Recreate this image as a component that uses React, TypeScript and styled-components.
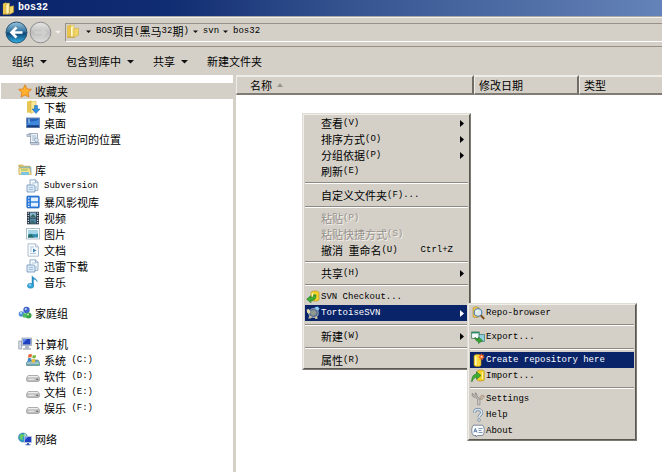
import React from "react";
import styled, { createGlobalStyle, css } from "styled-components";

const face = "#d4d0c8";
const navy = "#0a246a";

const GlobalStyle = createGlobalStyle`
  * { box-sizing: border-box; }
  body {
    margin: 0;
    background: #fff;
    overflow: hidden;
    font: 11px/16px "Liberation Mono", "Noto Sans CJK SC", monospace;
    color: #000;
  }
  button {
    font: inherit;
    color: inherit;
    border: 0;
    padding: 0;
    background: none;
    text-align: left;
  }
  a { color: inherit; text-decoration: none; }
  ul { list-style: none; margin: 0; padding: 0; }
  svg { display: block; flex: none; }
`;

/* ---------- text ---------- */

const Line = styled.span`
  display: inline-flex;
  align-items: center;
  white-space: pre;
`;
const Han = styled.span`
  font-family: "Noto Sans CJK SC", sans-serif;
  font-size: 11px;
  line-height: 16px;
`;
const Latin = styled.span`
  font-family: "Liberation Mono", monospace;
  font-size: 9px;
  line-height: 18px;
`;

function Text({ children }: { children: string }) {
  return (
    <Line>
      {children
        .split(/([\u4e00-\u9fff]+)/)
        .filter(Boolean)
        .map((run, i) =>
          /[\u4e00-\u9fff]/.test(run) ? <Han key={i}>{run}</Han> : <Latin key={i}>{run}</Latin>
        )}
    </Line>
  );
}

/* ---------- icons ---------- */

const shapes: Record<string, React.ReactNode> = {
  folder: (
    <>
      <path d="M1 2l3-1.500 2 1V13l-5 .5z" fill="#e9c44c" />
      <path d="M4.500 1.500L8 1v11.500l-3.500 1z" fill="#fbeb9c" stroke="#d0a83a" strokeWidth=".5" />
      <path d="M8 5l4.500-1V11L8 13.500z" fill="#f3d668" stroke="#c79d30" strokeWidth=".5" />
      <path d="M5.500 4v8" stroke="#fff8d0" />
      <path d="M1 13.500l4-.5 3 .5" stroke="#b18a2a" strokeWidth=".6" fill="none" />
    </>
  ),
  star: (
    <path
      d="M7 .8l1.900 4.100 4.500.5-3.300 3.100.9 4.600L7 10.900 3 13.100l.9-4.600L.6 5.400l4.500-.5z"
      fill="#ffb02e"
      stroke="#e07b12"
      strokeWidth=".8"
    />
  ),
  download: (
    <>
      <path d="M1 1.500l4-1 1 1V13l-5-.5z" fill="#e8c654" />
      <path d="M5 2l5-1v10l-5 2.500z" fill="#fae896" stroke="#d2ac42" strokeWidth=".5" />
      <path d="M8.500 5.500h3V9H14l-4 4.500L6 9h2.500z" fill="#2f8fdc" stroke="#1c62ac" strokeWidth=".5" />
    </>
  ),
  desktop: (
    <>
      <rect x=".5" y="2" width="13" height="9.500" fill="#2560b8" stroke="#6f8db8" />
      <path d="M1 8c4-5 8-1 12-5v6H1z" fill="#3d88dc" />
      <rect x="1" y="9.500" width="12" height="1.800" fill="#173a78" />
      <path d="M2 4h2M2 6h2" stroke="#cfe5fb" />
    </>
  ),
  recent: (
    <>
      <path d="M3 1.500h8.500v9H4.500V4L3 3z" fill="#eef3f8" stroke="#8d9bac" strokeWidth=".8" />
      <path d="M.8 2.500h4v2H1z" fill="#c6d1de" stroke="#8494a8" strokeWidth=".6" />
      <path d="M4 10.500h9v2.200H5z" fill="#c2ceda" stroke="#8494a8" strokeWidth=".6" />
      <path d="M6 4h4M6 6h4M6 8h3" stroke="#8ba5c2" strokeWidth=".8" />
      <circle cx="10.500" cy="8" r="2" fill="#dbe7f3" stroke="#7993ae" strokeWidth=".6" />
    </>
  ),
  library: (
    <>
      <path d="M.8 4V2h4l1 1.200H12v2z" fill="#ecd06a" stroke="#b99b3e" strokeWidth=".6" />
      <path d="M2 4h11v6H2z" fill="#9fd2ea" stroke="#4b95bb" strokeWidth=".5" />
      <path d="M.8 5h11l1.500 6.500H1z" fill="#f7e694" stroke="#b49b46" strokeWidth=".6" />
      <path d="M3 9h8v3H3z" fill="#7fc4df" />
      <path d="M3 7h7" stroke="#83b45d" />
    </>
  ),
  docs: (
    <>
      <path d="M4 .8h5.500l2.500 2.500v8H4z" fill="#f4f9fd" stroke="#7c9bbd" strokeWidth=".8" />
      <path d="M9.500.8v2.500H12" fill="none" stroke="#7c9bbd" strokeWidth=".7" />
      <path d="M1 6h6.500l1.500 1v6H1z" fill="#dceaf6" stroke="#6c92ba" strokeWidth=".8" />
      <path d="M3 8.500h4M3 10.500h4" stroke="#8db2d4" strokeWidth=".8" />
      <path d="M6 4h4M10 7v3" stroke="#a2bfd9" strokeWidth=".8" />
    </>
  ),
  storm: (
    <>
      <rect x=".8" y="1" width="12.500" height="12" rx="1" fill="#2c7fe0" stroke="#1c56ae" strokeWidth=".6" />
      <path d="M5 2.500h7v3.700H5zM5 7.800h7v3.700H5z" fill="#e6f2ff" />
      <path d="M2 3h1.500M2 6h1.500M2 9h1.500M2 11.500h1.500" stroke="#fff" />
    </>
  ),
  video: (
    <>
      <rect x="1" y=".8" width="12" height="12.500" fill="#273543" />
      <rect x="3.800" y="1.500" width="6.400" height="5" fill="#87b5c9" />
      <rect x="3.800" y="7.500" width="6.400" height="5" fill="#4f86a8" />
      <path d="M2.300 1.500v12M11.700 1.500v12" stroke="#dfe8ee" strokeWidth="1.200" strokeDasharray="1.200 1.200" />
      <path d="M4 6l3-3 3 3zM4 12l2-3 4 3z" fill="#366a66" />
    </>
  ),
  picture: (
    <>
      <rect x=".6" y="1.500" width="12.800" height="10.500" fill="#fafcfd" stroke="#9baebb" strokeWidth=".8" />
      <rect x="2" y="3" width="10" height="7.500" fill="#a2d5e8" />
      <path d="M2 7.500c3-2 6 1 10-1v4H2z" fill="#338fae" />
      <path d="M2 9l3-2 3 3.500H2z" fill="#2d6a66" />
    </>
  ),
  document: (
    <>
      <path d="M2 .8h7.500L12.500 4v9.200H2z" fill="#f8fbfd" stroke="#9db0c2" strokeWidth=".8" />
      <path d="M9.500.8V4h3" fill="#dbe6ef" stroke="#9db0c2" strokeWidth=".6" />
      <path d="M4 4h4M4 6h2M4 8h2M4 10.500h6" stroke="#9ab8d3" strokeWidth=".8" />
      <path d="M7 5.500l3.500 2L7 9.500z" fill="#4183bb" />
    </>
  ),
  music: (
    <>
      <path d="M6 .8c1 2.500 5 2.500 5.300 6-1-2-2.500-2.500-3.800-2.500V11H6z" fill="#2593cc" stroke="#1872a8" strokeWidth=".4" />
      <ellipse cx="4.600" cy="10.800" rx="3.200" ry="2.500" fill="#34a8dc" stroke="#1c79ac" strokeWidth=".5" />
      <ellipse cx="4" cy="10" rx="1.300" ry=".7" fill="#a9e0f5" />
    </>
  ),
  homegroup: (
    <>
      <circle cx="8.500" cy="4" r="3.200" fill="#3f63cc" />
      <circle cx="3.500" cy="8" r="2.800" fill="#4c8fdd" />
      <circle cx="10.500" cy="9.500" r="3" fill="#37a342" />
      <circle cx="6.800" cy="9.500" r="2.300" fill="#4dbb60" />
      <circle cx="7.800" cy="3.200" r="1.100" fill="#b9cdf8" />
      <circle cx="3" cy="7" r=".9" fill="#d7ebff" />
      <circle cx="10" cy="8.500" r="1" fill="#c4efc0" />
    </>
  ),
  computer: (
    <>
      <rect x=".8" y="4" width="3" height="8" fill="#d3dae3" stroke="#7f8b9a" strokeWidth=".6" />
      <rect x="4" y="1" width="9.500" height="7.500" fill="#cfd6e2" stroke="#7c8799" strokeWidth=".6" />
      <rect x="5" y="2" width="7.500" height="5.500" fill="#1e3fc0" />
      <path d="M5 2h4L5 6.500z" fill="#5c86ee" />
      <path d="M7.500 8.500h3l1 3h-5z" fill="#aeb8c7" />
      <path d="M5 12h8" stroke="#8793a5" />
    </>
  ),
  system: (
    <>
      <path d="M.5 9.500L3 7h9l1.500 2.500v3H.5z" fill="#72a6ae" stroke="#4c7c88" strokeWidth=".6" />
      <path d="M1 10h12" stroke="#c9e1e2" />
      <path d="M2.500 1.500c1.500-1 2.500-.5 3.500 0L5.500 4.500c-1-.5-2-.5-3.500.2z" fill="#e66532" />
      <path d="M6.800 2c1.200.6 2 .5 3.200 0L9.500 5c-1 .5-2 .5-3.200 0z" fill="#72b53a" />
      <path d="M2 5.500c1.300-.7 2.300-.6 3.300 0L4.800 8.500c-1-.5-2-.5-3.300.2z" fill="#3f85cf" />
      <path d="M6 6c1.200.6 2.200.5 3.300 0l-.5 3c-1 .5-2 .5-3.200 0z" fill="#f2bd2e" />
      <path d="M10.500 11.500h2" stroke="#4ad35f" />
    </>
  ),
  drive: (
    <>
      <path d="M.6 8.500L2.200 6.500h9.600l1.600 2v3.300l-1 .7H1.600l-1-.7z" fill="#bdbdbd" stroke="#8c8c8c" strokeWidth=".6" />
      <path d="M1.200 8.300l1.300-1.400h9l1.300 1.400z" fill="#ededed" />
      <path d="M2.500 10.300h6" stroke="#eee" />
      <path d="M10.300 10.300h1.800" stroke="#555" />
    </>
  ),
  network: (
    <>
      <circle cx="5" cy="5.500" r="4.500" fill="#2b9cc9" stroke="#196f98" strokeWidth=".5" />
      <path d="M2 3c2-2 4-1 4 .5S4 5 4.500 7 2 7.500 1.500 6z" fill="#68c862" />
      <path d="M6 1.500c1.500 0 2.500 1.500 2.500 2.500H6.500z" fill="#b8eac0" />
      <rect x="6.500" y="4.500" width="7" height="6" fill="#1c3fc4" stroke="#b9c3d5" strokeWidth=".8" />
      <path d="M7 5h3l-3 3z" fill="#668cf0" />
      <path d="M9 11h2v1.200h1.500v1H7.500v-1H9z" fill="#3c5cb4" />
    </>
  ),
  checkout: (
    <>
      <path d="M5 2.500C5 .5 13 .5 13 2.500v7c0 2-8 2-8 0z" fill="#f4d22c" stroke="#ad8610" strokeWidth=".6" />
      <path d="M6.500 3v6" stroke="#fff8b0" strokeWidth="1.500" />
      <path d="M10 5c0 4-1.500 5.500-5 5.500v2.300L.7 9.200 5 5.600v2c2 0 2.500-1 2.700-2.900z" fill="#3fae35" stroke="#1d7520" strokeWidth=".6" />
    </>
  ),
  tortoise: (
    <>
      <path d="M3 7.500C3 4 5.500 2 8.500 2.500s4.500 3 3.500 6.500c-1.500 3-6.500 3.500-9 .5z" fill="#5d6f92" stroke="#b9c4d8" strokeWidth=".7" />
      <path d="M5 5l3-1.200L10.500 6 9.500 9 6 9.800 4.300 7.500z" fill="#8f9a8e" />
      <path d="M8.500 1.500l3-1 2 2-1 2-2.500-.7z" fill="#8fc8ee" />
      <path d="M.7 3.500L3 3l1.500 3-1.700 2L1 6.500z" fill="#e6dcae" />
      <path d="M3.500 9.500l-1.300 3h2.500l1.500-1.500zM8.500 11l1 2h2l-.2-3z" fill="#cdc097" />
    </>
  ),
  browse: (
    <>
      <path d="M2 2C2 .5 8 .5 8 2v8.500c0 1.500-6 1.500-6 0z" fill="#efc858" stroke="#a88127" strokeWidth=".6" />
      <circle cx="7" cy="6.500" r="3.800" fill="#dbeefb" fillOpacity=".9" stroke="#4b7aa9" strokeWidth="1.100" />
      <path d="M9.800 9.300l3.400 3.700" stroke="#80511f" strokeWidth="2" />
      <path d="M5 6c.5-1.500 1.500-1.800 2.500-1.800" stroke="#fff" fill="none" />
    </>
  ),
  exporting: (
    <>
      <rect x=".7" y="2" width="7.500" height="6.500" fill="#f7fbff" stroke="#3c7a4c" strokeWidth=".8" />
      <path d="M.5 2.700h8" stroke="#2c8a6b" strokeWidth="1.500" />
      <rect x="8" y="4.500" width="5.500" height="7" fill="#8fcfe0" stroke="#397a6a" strokeWidth=".7" />
      <path d="M4 7c1 2 2 2 3.500 2V7l4 3.500-4 3V11.500C5 11.500 4 9.500 4 7z" fill="#38a235" stroke="#1e7220" strokeWidth=".5" />
    </>
  ),
  create: (
    <>
      <path d="M3 3c0-2 7-2 7 0v9c0 2-7 2-7 0z" fill="#f8d83a" stroke="#c49613" strokeWidth=".6" />
      <path d="M4.800 3.500v8.500" stroke="#fffac4" strokeWidth="1.500" />
      <path d="M10.500 0l.8 2 2-.5-1 1.900 1.500 1.300-2 .5-.1 2-1.500-1.300L8.500 7l.3-2.100L7 4l1.800-.9L8.500 1l1.500.9z" fill="#f4682a" />
      <circle cx="10.600" cy="3.700" r="1" fill="#ffd9a4" />
    </>
  ),
  importing: (
    <>
      <path d="M6 2.500c0-2 7.300-2 7.300 0v8c0 2-7.300 2-7.300 0z" fill="#f4d22c" stroke="#ad8610" strokeWidth=".6" />
      <path d="M11.500 3v7" stroke="#fff8b0" />
      <path d="M.7 13C.7 8 2 5.500 5.500 5V2.800L10 6.500l-4.500 3.700V8C3.500 8.500 2 10 .7 13z" fill="#3fae35" stroke="#1d7520" strokeWidth=".6" />
    </>
  ),
  settings: (
    <>
      <path
        d="M1.200 1.200v2.600l2 1.600 1.500-.4 2 2.500v5.300h2.200V7.200L5.800 3.800 6 2 4.200.8l.2 2-1.300.6z"
        fill="#bdbab4"
        stroke="#77726b"
        strokeWidth=".6"
      />
      <path d="M8.800 4.800l1.500-1.600 2.200.2 1 1.800-1.700-.5-.8 1 .8 1.300-2 .6z" fill="#cdb9a8" stroke="#8d7868" strokeWidth=".5" />
      <path d="M7.800 8v4.500" stroke="#e6e4e0" strokeWidth=".8" />
    </>
  ),
  help: (
    <>
      <path d="M3.500 4.700C3.500 2.500 5 1.500 7 1.500s3.700 1.200 3.700 3.200c0 2.300-2.700 2.300-2.700 4.500" fill="none" stroke="#71879d" strokeWidth="3" />
      <path d="M3.500 4.700C3.500 2.500 5 1.500 7 1.500s3.700 1.200 3.700 3.200c0 2.300-2.700 2.300-2.700 4.500" fill="none" stroke="#d8e5ef" strokeWidth="1.700" />
      <circle cx="8" cy="12" r="1.400" fill="#d8e5ef" stroke="#71879d" strokeWidth=".7" />
    </>
  ),
  about: (
    <>
      <path d="M3 1.200h8c3 0 3 10.300 0 10.300H6.500L5 13v-1.500H3C0 11.500 0 1.200 3 1.200z" fill="#fbfcfe" stroke="#66768a" strokeWidth=".8" />
      <path d="M2.800 8.500l1.600-4L6 8.500M3.400 7.200h2" stroke="#3c5f92" strokeWidth=".8" fill="none" />
      <path d="M7.500 4.500h4M7.500 6.500h3M7.500 8.500h4" stroke="#587aa4" strokeWidth=".8" />
    </>
  ),
};

function Icon({ name, size = 14 }: { name: string; size?: number }) {
  return (
    <svg width={size} height={size} viewBox="0 0 14 14" aria-hidden="true">
      {shapes[name]}
    </svg>
  );
}

const Down = ({ size = 7, color = "#111" }: { size?: number; color?: string }) => (
  <svg width={size} height={size} viewBox="0 0 7 7" aria-hidden="true">
    <path d="M0 2h7L3.500 5.500z" fill={color} />
  </svg>
);

const Right = () => (
  <svg width="4" height="7" viewBox="0 0 4 7" aria-hidden="true">
    <path d="M0 0l4 3.500L0 7z" fill="currentColor" />
  </svg>
);

/* ---------- window frame ---------- */

const Window = styled.main`
  display: flex;
  flex-direction: column;
  min-height: 100vh;
`;
const TitleBar = styled.header`
  display: flex;
  align-items: center;
  gap: 3px;
  height: 16px;
  padding-left: 2px;
  background: linear-gradient(90deg, ${navy} 0%, #102c72 25%, #35538f 52%, #6483b8 100%);
  color: #fff;
`;
const Title = styled.h1`
  margin: 0;
  font: bold 10px/18px "Liberation Mono", monospace;
`;
const NavBar = styled.div`
  display: flex;
  align-items: center;
  height: 31px;
  padding: 2px 0 0 4px;
  background: ${face};
  border-bottom: 1px solid #96928a;
  box-shadow: inset 0 1px #aaa8a4, inset 0 2px #f4f2ee;
`;
const RoundButton = styled.button`
  display: flex;
  width: 24px;
  height: 24px;
  align-items: center;
  justify-content: center;
`;
const HistoryButton = styled.button`
  width: 13px;
  padding-left: 3px;
`;
const Address = styled.div`
  display: flex;
  align-items: center;
  flex: 1;
  height: 19px;
  padding-bottom: 2px;
  border: solid;
  border-width: 1px 0 1px 1px;
  border-color: #96928a #fff #fff #96928a;
`;
const Crumb = styled.button`
  display: flex;
  align-items: center;
  gap: 5px;
  margin-right: 4px;
`;
const AddressIcon = styled.span`
  margin-right: 6px;
`;
const ToolBar = styled.div`
  display: flex;
  align-items: center;
  gap: 19px;
  height: 28px;
  padding-left: 12px;
  background: ${face};
`;
const ToolButton = styled.button`
  display: flex;
  align-items: center;
  gap: 6px;
`;
const Body = styled.div`
  display: flex;
  flex: 1;
`;

/* ---------- sidebar ---------- */

const Sidebar = styled.nav`
  display: flex;
  flex-direction: column;
  flex: none;
  gap: 15px;
  width: 236px;
  padding: 8px 0 0 1px;
  border-right: 3px solid ${face};
`;
const Place = styled.a<{ $child?: boolean; $selected?: boolean }>`
  display: flex;
  align-items: center;
  gap: ${(p) => (p.$child ? 4 : 3)}px;
  height: 16px;
  padding-left: ${(p) => (p.$child ? 25 : 17)}px;
  background: ${(p) => (p.$selected ? face : "transparent")};
`;

type Entry = [icon: string, label: string];
const groups: { head: Entry; items: Entry[]; selected?: boolean }[] = [
  {
    head: ["star", "收藏夹"],
    selected: true,
    items: [["download", "下载"], ["desktop", "桌面"], ["recent", "最近访问的位置"]],
  },
  {
    head: ["library", "库"],
    items: [
      ["docs", "Subversion"],
      ["storm", "暴风影视库"],
      ["video", "视频"],
      ["picture", "图片"],
      ["document", "文档"],
      ["docs", "迅雷下载"],
      ["music", "音乐"],
    ],
  },
  { head: ["homegroup", "家庭组"], items: [] },
  {
    head: ["computer", "计算机"],
    items: [["system", "系统 (C:)"], ["drive", "软件 (D:)"], ["drive", "文档 (E:)"], ["drive", "娱乐 (F:)"]],
  },
  { head: ["network", "网络"], items: [] },
];

/* ---------- file list ---------- */

const Files = styled.section`
  position: relative;
  flex: 1;
  min-width: 0;
`;
const Columns = styled.table`
  width: 100%;
  table-layout: fixed;
  border-collapse: separate;
  border-spacing: 0;
`;
const Column = styled.th<{ $width?: number; $indent?: number }>`
  width: ${(p) => (p.$width ? p.$width + "px" : "auto")};
  height: 20px;
  padding: 0 0 0 ${(p) => p.$indent ?? 4}px;
  background: ${face};
  border-top: 2px solid #efede8;
  border-bottom: 2px solid #807c74;
  border-right: ${(p) => (p.$width ? "2px solid #716d66" : "0")};
  border-left: 1px solid #efede8;
  font-weight: normal;
  text-align: left;
`;
const SortButton = styled.button`
  display: flex;
  align-items: center;
  gap: 5px;
`;

/* ---------- menus ---------- */

const Menu = styled.ul<{ $nested?: boolean }>`
  position: absolute;
  z-index: 1;
  padding: 0 1px;
  background: ${face};
  border: 2px solid;
  border-color: #f0eee9 #5a5751 #5a5751 #f0eee9;
  outline: 1px solid rgba(190, 186, 178, 0.35);
  outline-offset: -1px;
  ${(p) =>
    p.$nested
      ? css`
          top: -2px;
          left: calc(100% - 1px);
          width: 170px;
        `
      : css`
          top: 38px;
          left: 66px;
          width: 169px;
        `}
`;
const MenuRow = styled.li`
  position: relative;
`;
const MenuButton = styled.button<{ $active?: boolean }>`
  display: flex;
  align-items: center;
  width: 100%;
  height: 16px;
  padding: 0 4px 0 1px;
  background: ${(p) => (p.$active ? navy : "transparent")};
  color: ${(p) => (p.$active ? "#fff" : "#000")};
  &:disabled {
    color: #96928c;
    text-shadow: 1px 1px #f4f2ee;
  }
`;
const MenuIcon = styled.span`
  width: 15px;
  flex: none;
`;
const MenuLabel = styled.span`
  flex: 1;
  display: flex;
`;
const Shortcut = styled.span`
  display: flex;
  margin-right: 11px;
`;
const Divider = styled.li<{ $tight?: boolean }>`
  height: ${(p) => (p.$tight ? 7 : 8)}px;
  padding-top: 3px;
  &::before {
    content: "";
    display: block;
    border-top: 1px solid #8e8a82;
    border-bottom: 1px solid #fff;
  }
`;

type Item =
  | "divider"
  | "tight"
  | {
      label: string;
      icon?: string;
      shortcut?: string;
      more?: boolean;
      disabled?: boolean;
      active?: boolean;
      items?: Item[];
    };

const svnItems: Item[] = [
  { label: "Repo-browser", icon: "browse" },
  "divider",
  { label: "Export...", icon: "exporting" },
  "tight",
  { label: "Create repository here", icon: "create", active: true },
  { label: "Import...", icon: "importing" },
  "tight",
  { label: "Settings", icon: "settings" },
  { label: "Help", icon: "help" },
  { label: "About", icon: "about" },
];

const contextItems: Item[] = [
  { label: "查看(V)", more: true },
  { label: "排序方式(O)", more: true },
  { label: "分组依据(P)", more: true },
  { label: "刷新(E)" },
  "divider",
  { label: "自定义文件夹(F)..." },
  "tight",
  { label: "粘贴(P)", disabled: true },
  { label: "粘贴快捷方式(S)", disabled: true },
  { label: "撤消 重命名(U)", shortcut: "Ctrl+Z" },
  "tight",
  { label: "共享(H)", more: true },
  "divider",
  { label: "SVN Checkout...", icon: "checkout" },
  { label: "TortoiseSVN", icon: "tortoise", more: true, active: true, items: svnItems },
  "tight",
  { label: "新建(W)", more: true },
  "divider",
  { label: "属性(R)" },
];

function PopupMenu({ items, label, nested }: { items: Item[]; label: string; nested?: boolean }) {
  return (
    <Menu role="menu" aria-label={label} $nested={nested}>
      {items.map((item, i) =>
        typeof item === "string" ? (
          <Divider key={i} role="separator" $tight={item === "tight"} />
        ) : (
          <MenuRow key={i} role="none">
            <MenuButton
              type="button"
              role="menuitem"
              disabled={item.disabled}
              $active={item.active}
              aria-haspopup={item.more ? "menu" : undefined}
            >
              <MenuIcon>{item.icon && <Icon name={item.icon} />}</MenuIcon>
              <MenuLabel>
                <Text>{item.label}</Text>
              </MenuLabel>
              {item.shortcut && (
                <Shortcut>
                  <Text>{item.shortcut}</Text>
                </Shortcut>
              )}
              {item.more && <Right />}
            </MenuButton>
            {item.items && <PopupMenu items={item.items} label={item.label} nested />}
          </MenuRow>
        )
      )}
    </Menu>
  );
}

/* ---------- page ---------- */

export default function App() {
  return (
    <Window>
      <GlobalStyle />
      <TitleBar>
        <Icon name="folder" size={13} />
        <Title>bos32</Title>
      </TitleBar>
      <NavBar>
        <RoundButton type="button" aria-label="后退">
          <svg width="23" height="23" viewBox="0 0 23 23" aria-hidden="true">
            <defs>
              <linearGradient id="back" x1="0" y1="0" x2="0" y2="1">
                <stop offset="0" stopColor="#9cc4dc" />
                <stop offset=".48" stopColor="#2c6e9c" />
                <stop offset=".52" stopColor="#0c4272" />
                <stop offset="1" stopColor="#35b4e6" />
              </linearGradient>
            </defs>
            <circle cx="11.500" cy="11.500" r="10.500" fill="url(#back)" stroke="#2a5673" />
            <path d="M17.500 11.500H7M11.500 6.500l-5 5 5 5" fill="none" stroke="#fff" strokeWidth="2.600" />
          </svg>
        </RoundButton>
        <RoundButton type="button" aria-label="前进">
          <svg width="23" height="23" viewBox="0 0 23 23" aria-hidden="true">
            <defs>
              <linearGradient id="forward" x1="0" y1="0" x2="0" y2="1">
                <stop offset="0" stopColor="#e8e8e6" />
                <stop offset=".5" stopColor="#bebebe" />
                <stop offset="1" stopColor="#dededc" />
              </linearGradient>
            </defs>
            <circle cx="11.500" cy="11.500" r="10.300" fill="url(#forward)" stroke="#8b8b8b" />
            <path d="M5.500 11.500H16M11.500 6.500l5 5-5 5" fill="none" stroke="#d0d0d0" strokeWidth="2.400" />
          </svg>
        </RoundButton>
        <HistoryButton type="button" aria-label="历史记录">
          <Down size={6} color="#f4f3f0" />
        </HistoryButton>
        <Address>
          <AddressIcon>
            <Icon name="folder" />
          </AddressIcon>
          <Crumb type="button">
            <Down size={5} />
            <Text>BOS项目(黑马32期)</Text>
          </Crumb>
          <Crumb type="button">
            <Down size={5} />
            <Text>svn</Text>
          </Crumb>
          <Crumb type="button">
            <Down size={5} />
            <Text>bos32</Text>
          </Crumb>
        </Address>
      </NavBar>
      <ToolBar role="toolbar">
        {["组织", "包含到库中", "共享"].map((label) => (
          <ToolButton key={label} type="button" aria-haspopup="menu">
            <Text>{label}</Text>
            <Down />
          </ToolButton>
        ))}
        <ToolButton type="button">
          <Text>新建文件夹</Text>
        </ToolButton>
      </ToolBar>
      <Body>
        <Sidebar>
          {groups.map(({ head, items, selected }) => (
            <ul key={head[1]}>
              <li>
                <Place href="#" $selected={selected}>
                  <Icon name={head[0]} />
                  <Text>{head[1]}</Text>
                </Place>
              </li>
              {items.map(([icon, label]) => (
                <li key={label}>
                  <Place href="#" $child>
                    <Icon name={icon} />
                    <Text>{label}</Text>
                  </Place>
                </li>
              ))}
            </ul>
          ))}
        </Sidebar>
        <Files>
          <Columns>
            <thead>
              <tr>
                <Column scope="col" $width={238} $indent={13}>
                  <SortButton type="button">
                    <Text>名称</Text>
                    <svg width="6" height="4" viewBox="0 0 6 4" aria-hidden="true">
                      <path d="M0 4l3-4 3 4z" fill="#98948c" />
                    </svg>
                  </SortButton>
                </Column>
                <Column scope="col" $width={105}>
                  <SortButton type="button">
                    <Text>修改日期</Text>
                  </SortButton>
                </Column>
                <Column scope="col">
                  <SortButton type="button">
                    <Text>类型</Text>
                  </SortButton>
                </Column>
              </tr>
            </thead>
          </Columns>
          <PopupMenu items={contextItems} label="文件夹" />
        </Files>
      </Body>
    </Window>
  );
}
